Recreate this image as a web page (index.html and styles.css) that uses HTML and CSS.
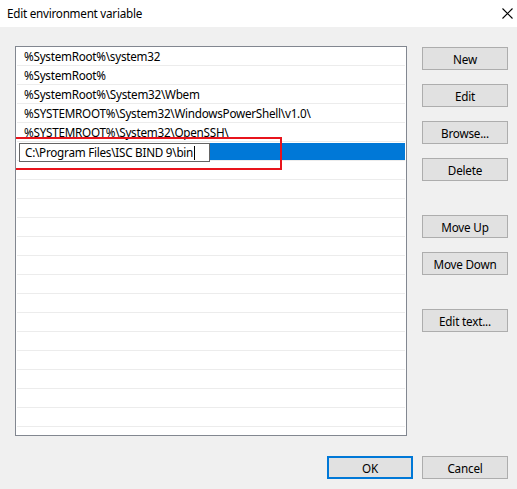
FILE: index.html
```html
<!doctype html>
<html lang="en">
<head>
    <meta charset="UTF-8">
    <title>Edit environment variable</title>
    <link rel="stylesheet" href="styles.css">
</head>
<body>
<div class="dialog">
    <div class="titlebar">
        <span class="title">Edit environment variable</span>
        <svg class="close" width="11" height="11" viewBox="0 0 11 11">
            <path d="M0.5 0.5 L10.5 10.5 M10.5 0.5 L0.5 10.5" stroke="#000" stroke-width="1.1" fill="none"/>
        </svg>
    </div>
    <div class="body">
        <div class="pathlist">
            <ul class="rows">
                <li>%SystemRoot%\system32</li>
                <li>%SystemRoot%</li>
                <li>%SystemRoot%\System32\Wbem</li>
                <li>%SYSTEMROOT%\System32\WindowsPowerShell\v1.0\</li>
                <li>%SYSTEMROOT%\System32\OpenSSH\</li>
                <li class="selected"><div class="editbox">C:\Program Files\ISC BIND 9\bin<span class="caret"></span></div></li>
                <li></li><li></li><li></li><li></li><li></li>
                <li></li><li></li><li></li><li></li><li></li>
                <li></li><li></li><li></li><li></li><li></li>
            </ul>
            <div class="mark"></div>
        </div>
        <div class="actions">
            <button class="btn">New</button>
            <button class="btn">Edit</button>
            <button class="btn">Browse...</button>
            <button class="btn">Delete</button>
            <button class="btn group">Move Up</button>
            <button class="btn">Move Down</button>
            <button class="btn group">Edit text...</button>
        </div>
    </div>
    <div class="footer">
        <button class="btn default">OK</button>
        <button class="btn">Cancel</button>
    </div>
</div>
</body>
</html>
```
FILE: styles.css
```css
* {
    padding: 0;
    margin: 0;
    list-style: none;
    box-sizing: border-box;
}

body {
    font-family: "Noto Sans", "Liberation Sans", sans-serif;
    font-size: 11.7px;
    letter-spacing: -0.25px;
    color: #000;
    background: #f0f0f0;
}

.dialog {
    width: 517px;
    height: 489px;
    background: #f0f0f0;
}

.titlebar {
    height: 27px;
    background: #fff;
    display: flex;
    align-items: center;
    justify-content: space-between;
    padding: 0 4px 1px 7px;
}

.body {
    display: flex;
    padding: 19px 9px 0 15px;
}

.pathlist {
    width: 392px;
    height: 390px;
    border: 1px solid #828790;
    background: #fff;
    overflow: hidden;
    position: relative;
}

.rows {
    padding: 0 1px;
}

.rows li {
    height: 19px;
    line-height: 18px;
    border-bottom: 1px solid #ececec;
    padding-left: 7px;
    white-space: nowrap;
}

/* row being edited: white gutter, then the edit box, then the highlight */
.rows li.selected {
    padding-left: 2px;
    padding-top: 1px;
    background-color: #fff;
    background-image: linear-gradient(#0078d7, #0078d7);
    background-clip: content-box;
}

.editbox {
    width: 191px;
    height: 19px;
    line-height: 17px;
    border: 1px solid #646464;
    background: #fff;
    padding-left: 5px;
}

.caret {
    display: inline-block;
    width: 1px;
    height: 14px;
    margin-left: 1px;
    background: #000;
    vertical-align: -3px;
}

/* red frame drawn over the row being edited */
.mark {
    position: absolute;
    left: -9px;
    top: 90px;
    width: 275px;
    height: 33px;
    border: 2px solid #e8141c;
}

.actions {
    display: flex;
    flex-direction: column;
    margin-left: 15px;
    padding-top: 1px;
}

.btn {
    width: 86px;
    height: 23px;
    background: #e1e1e1;
    border: 1px solid #adadad;
    font-family: inherit;
    font-size: 11.7px;
    letter-spacing: -0.2px;
    color: #000;
    margin-bottom: 14px;
}

.actions .group {
    margin-top: 20px;
}

.footer {
    display: flex;
    justify-content: flex-end;
    gap: 9px;
    padding: 20px 9px 0 0;
}

.footer .btn {
    margin: 0;
}

.btn.default {
    border: 2px solid #0078d7;
}
```
